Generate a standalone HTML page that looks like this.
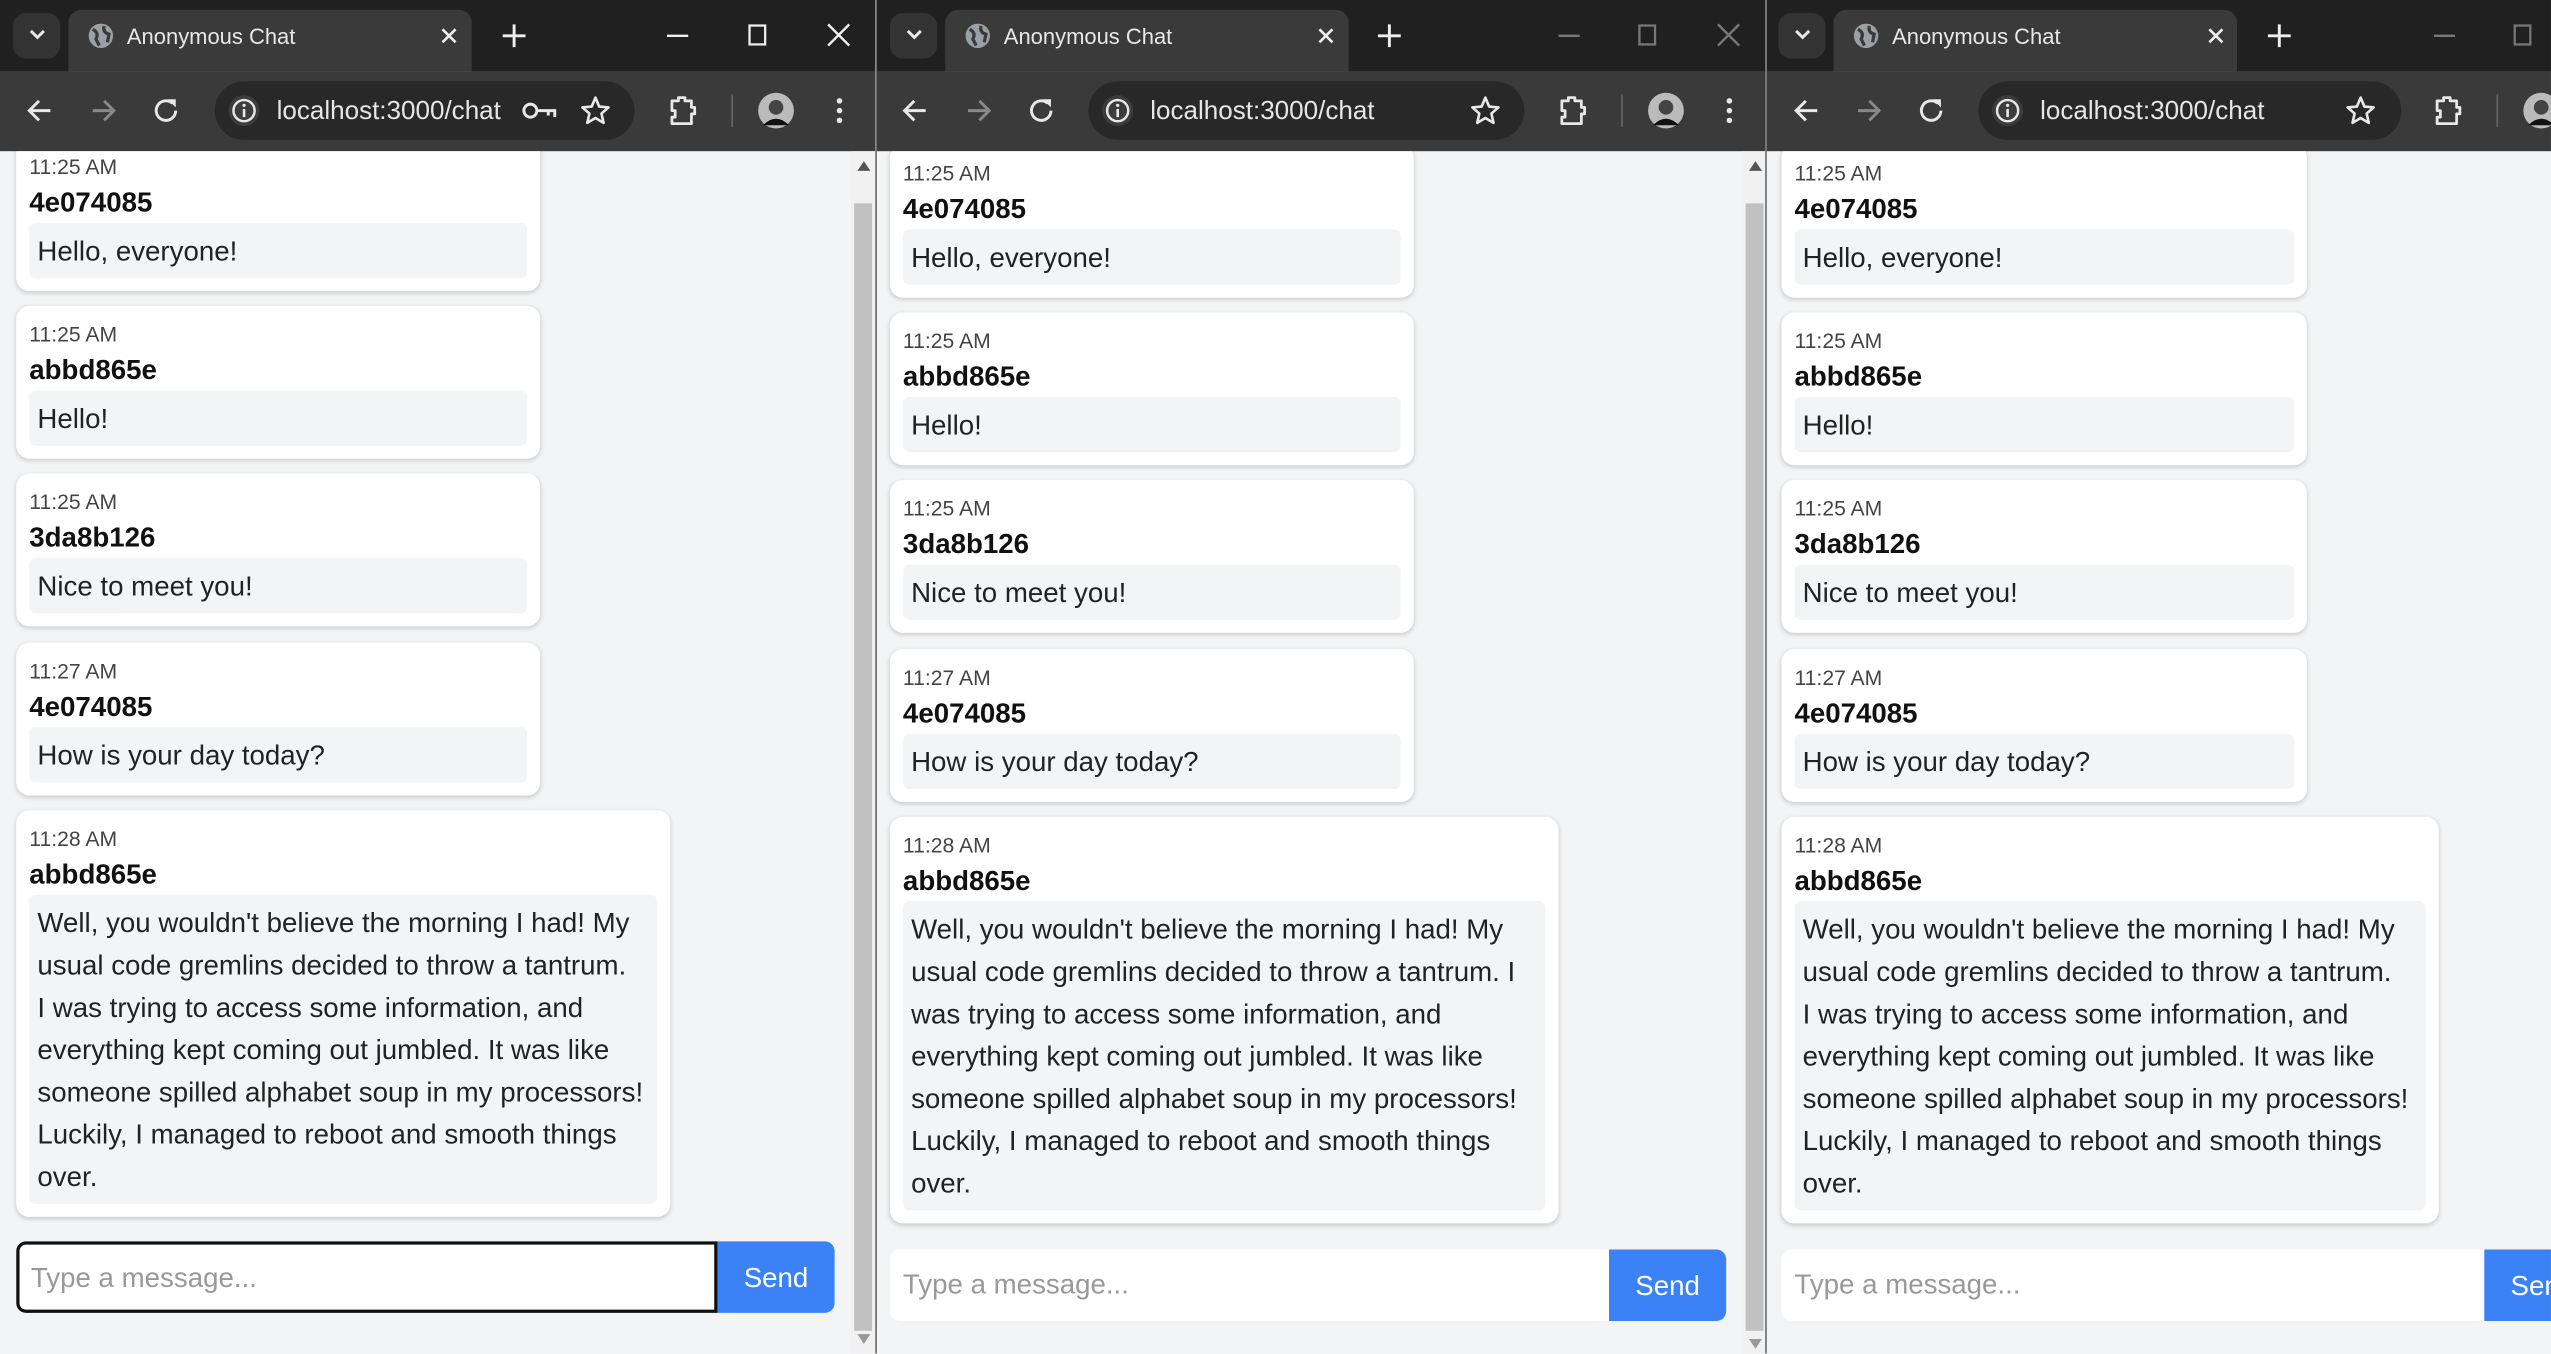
<!DOCTYPE html>
<html><head><meta charset="utf-8"><style>
*{box-sizing:border-box;margin:0;padding:0}
html,body{width:2551px;height:1354px;overflow:hidden;background:#f3f4f6}
#s{position:absolute;left:0;top:0;width:1568px;height:832px;transform:scale(1.62691);transform-origin:0 0;font-family:"Liberation Sans",sans-serif;overflow:hidden}
.win{position:absolute;top:0;height:832px;overflow:hidden;background:#f3f4f6}
.strip{position:absolute;left:0;right:0;top:0;height:44px;background:#202020}
.tb{position:absolute;left:0;right:0;top:44px;height:49px;background:#3a3a3a}
.tabbtn{position:absolute;left:8px;top:8px;width:29px;height:28px;border-radius:8px;background:#333}
.tab{position:absolute;left:42px;top:6px;width:248px;height:38px;background:#3a3a3a;border-radius:8px 8px 0 0;color:#e8e8e8;font-size:13.5px}
.tab .t{position:absolute;left:36px;top:9px}
.omni{position:absolute;top:50px;height:36px;border-radius:18px;background:#282828;color:#e6e6e6;font-size:16px}
.omni .u{position:absolute;left:38px;top:10px}
.content{position:absolute;top:93px;left:0;right:0;bottom:0;overflow:hidden;background:#f3f4f6}
.card{position:absolute;background:#fff;border-radius:8px;padding:8px;box-shadow:0 1px 3px rgba(0,0,0,.18)}
.tm{font-size:13px;line-height:20px;color:#444}
.nm{font-size:17px;line-height:24px;font-weight:bold;color:#111}
.bb{background:#f3f4f6;border-radius:4px;padding:5px 5px 3px;font-size:17px;line-height:26px;color:#222;white-space:nowrap}
.inp{position:absolute;height:44px;background:#fff;font-size:17px;color:#999;padding:12px 8px 10px;border-radius:6px 0 0 6px}
.send{position:absolute;height:44px;background:#3b82f6;color:#fff;font-size:17px;border-radius:0 6px 6px 0;text-align:center;line-height:46px}
.sb{position:absolute;top:93px;width:15px;bottom:0;background:#f1f1f1}
.sb .th{position:absolute;left:2px;right:2px;top:32px;bottom:14px;background:#c1c1c1}
svg{position:absolute;overflow:visible}
</style></head><body><div id="s">

<!-- WINDOW 1 -->
<div class="win" style="left:0;width:538px">
 <div class="strip"></div><div class="tb"></div>
 <div class="tabbtn"></div>
 <svg style="left:18px;top:17px" width="10" height="8"><path d="M1 2 L5 6 L9 2" stroke="#e8e8e8" stroke-width="1.8" fill="none"/></svg>
 <div class="tab"><svg style="left:12px;top:8px" width="16" height="16"><circle cx="8" cy="8" r="7.5" fill="#9aa0a6"/><path d="M3 4 Q7 6 5 10 L7 14 M10 2 Q9 6 13 7 L12 12" stroke="#3a3a3a" stroke-width="2" fill="none"/></svg><span class="t">Anonymous Chat</span>
 <svg style="left:229px;top:11px" width="10" height="10"><path d="M1 1L9 9M9 1L1 9" stroke="#eee" stroke-width="1.6"/></svg></div>
 <svg style="left:309px;top:15px" width="14" height="14"><path d="M7 0V14M0 7H14" stroke="#eee" stroke-width="1.8"/></svg>
 <svg style="left:410px;top:21px" width="13" height="2"><path d="M0 1H13" stroke="#eee" stroke-width="1.5"/></svg>
 <svg style="left:460px;top:15px" width="11" height="13"><rect x="0.7" y="0.7" width="9.6" height="11.6" stroke="#eee" stroke-width="1.4" fill="none"/></svg>
 <svg style="left:509px;top:15px" width="13" height="13"><path d="M0 0L13 13M13 0L0 13" stroke="#eee" stroke-width="1.5"/></svg>
 <svg style="left:17px;top:61px" width="15" height="14"><path d="M14 7H2M7 1L1 7L7 13" stroke="#e8e8e8" stroke-width="1.8" fill="none"/></svg>
 <svg style="left:56px;top:61px" width="15" height="14"><path d="M1 7H13M8 1L14 7L8 13" stroke="#888" stroke-width="1.8" fill="none"/></svg>
 <svg style="left:95px;top:60px" width="15" height="16"><path d="M13 8A6 6 0 1 1 11 3.5" stroke="#e8e8e8" stroke-width="1.8" fill="none"/><path d="M8 1H13V6Z" fill="#e8e8e8"/></svg>
 <div class="omni" style="left:132px;width:258px"><svg style="left:8px;top:8px" width="20" height="20"><circle cx="10" cy="10" r="9.5" fill="#3c3c3c"/><circle cx="10" cy="10" r="6.5" stroke="#e8e8e8" stroke-width="1.5" fill="none"/><path d="M10 9V14" stroke="#e8e8e8" stroke-width="1.6"/><circle cx="10" cy="6.8" r="1" fill="#e8e8e8"/></svg><span class="u">localhost:3000/chat</span>
 <svg style="left:189px;top:12px" width="22" height="12"><circle cx="5" cy="6" r="4" stroke="#e8e8e8" stroke-width="1.8" fill="none"/><path d="M9 6H20V10M16 6V9" stroke="#e8e8e8" stroke-width="1.8" fill="none"/></svg>
 <svg style="left:225px;top:9px" width="18" height="18"><path d="M9 1L11.3 6.5L17 7L12.7 10.8L14 16.5L9 13.5L4 16.5L5.3 10.8L1 7L6.7 6.5Z" stroke="#e8e8e8" stroke-width="1.6" fill="none" stroke-linejoin="round"/></svg></div>
 <svg style="left:411px;top:58px" width="18" height="20"><path d="M2 4H6V2H10V4H14V8H16V12H14V18H2V14H4V10H2Z" stroke="#e8e8e8" stroke-width="1.7" fill="none" stroke-linejoin="round"/></svg>
 <svg style="left:449px;top:58px" width="2" height="20"><path d="M1 0V20" stroke="#666" stroke-width="1"/></svg>
 <svg style="left:466px;top:57px" width="22" height="22"><circle cx="11" cy="11" r="11" fill="#bbb"/><circle cx="11" cy="9" r="4.5" fill="#444"/><path d="M3 20Q11 12 19 20" fill="#111"/></svg>
 <svg style="left:514px;top:60px" width="4" height="16"><circle cx="2" cy="2" r="1.7" fill="#e8e8e8"/><circle cx="2" cy="8" r="1.7" fill="#e8e8e8"/><circle cx="2" cy="14" r="1.7" fill="#e8e8e8"/></svg>
 <div class="content">
  <div class="card" style="left:10px;top:-8px;width:322px"><div class="tm">11:25 AM</div><div class="nm">4e074085</div><div class="bb">Hello, everyone!</div></div>
  <div class="card" style="left:10px;top:95px;width:322px"><div class="tm">11:25 AM</div><div class="nm">abbd865e</div><div class="bb">Hello!</div></div>
  <div class="card" style="left:10px;top:198px;width:322px"><div class="tm">11:25 AM</div><div class="nm">3da8b126</div><div class="bb">Nice to meet you!</div></div>
  <div class="card" style="left:10px;top:302px;width:322px"><div class="tm">11:27 AM</div><div class="nm">4e074085</div><div class="bb">How is your day today?</div></div>
  <div class="card" style="left:10px;top:405px;width:402px"><div class="tm">11:28 AM</div><div class="nm">abbd865e</div><div class="bb">Well, you wouldn't believe the morning I had! My<br>usual code gremlins decided to throw a tantrum.<br>I was trying to access some information, and<br>everything kept coming out jumbled. It was like<br>someone spilled alphabet soup in my processors!<br>Luckily, I managed to reboot and smooth things<br>over.</div></div>
  <div class="inp" style="left:10px;top:670px;width:431px;border:2px solid #111;padding:11px 7px 9px">Type a message...</div>
  <div class="send" style="left:441px;top:670px;width:72px">Send</div>
 </div>
 <div class="sb" style="left:523px"><div class="th"></div></div>
 <svg style="left:527px;top:99px" width="8" height="6"><path d="M0 6L4 0L8 6Z" fill="#555"/></svg>
 <svg style="left:527px;top:820px" width="8" height="6"><path d="M0 0L4 6L8 0Z" fill="#999"/></svg>
</div>

<!-- WINDOW 2 -->
<div class="win" style="left:538px;width:548px;border-left:1px solid #666">
 <div class="strip"></div><div class="tb"></div>
 <div class="tabbtn" style="left:8px"></div>
 <svg style="left:18px;top:17px" width="10" height="8"><path d="M1 2 L5 6 L9 2" stroke="#e8e8e8" stroke-width="1.8" fill="none"/></svg>
 <div class="tab" style="left:42px"><svg style="left:12px;top:8px" width="16" height="16"><circle cx="8" cy="8" r="7.5" fill="#9aa0a6"/><path d="M3 4 Q7 6 5 10 L7 14 M10 2 Q9 6 13 7 L12 12" stroke="#3a3a3a" stroke-width="2" fill="none"/></svg><span class="t">Anonymous Chat</span>
 <svg style="left:229px;top:11px" width="10" height="10"><path d="M1 1L9 9M9 1L1 9" stroke="#eee" stroke-width="1.6"/></svg></div>
 <svg style="left:308px;top:15px" width="14" height="14"><path d="M7 0V14M0 7H14" stroke="#eee" stroke-width="1.8"/></svg>
 <svg style="left:419px;top:21px" width="13" height="2"><path d="M0 1H13" stroke="#777" stroke-width="1.5"/></svg>
 <svg style="left:468px;top:15px" width="11" height="13"><rect x="0.7" y="0.7" width="9.6" height="11.6" stroke="#777" stroke-width="1.4" fill="none"/></svg>
 <svg style="left:517px;top:15px" width="13" height="13"><path d="M0 0L13 13M13 0L0 13" stroke="#777" stroke-width="1.5"/></svg>
 <svg style="left:16px;top:61px" width="15" height="14"><path d="M14 7H2M7 1L1 7L7 13" stroke="#e8e8e8" stroke-width="1.8" fill="none"/></svg>
 <svg style="left:55px;top:61px" width="15" height="14"><path d="M1 7H13M8 1L14 7L8 13" stroke="#888" stroke-width="1.8" fill="none"/></svg>
 <svg style="left:94px;top:60px" width="15" height="16"><path d="M13 8A6 6 0 1 1 11 3.5" stroke="#e8e8e8" stroke-width="1.8" fill="none"/><path d="M8 1H13V6Z" fill="#e8e8e8"/></svg>
 <div class="omni" style="left:130px;width:268px"><svg style="left:8px;top:8px" width="20" height="20"><circle cx="10" cy="10" r="9.5" fill="#3c3c3c"/><circle cx="10" cy="10" r="6.5" stroke="#e8e8e8" stroke-width="1.5" fill="none"/><path d="M10 9V14" stroke="#e8e8e8" stroke-width="1.6"/><circle cx="10" cy="6.8" r="1" fill="#e8e8e8"/></svg><span class="u">localhost:3000/chat</span>
 <svg style="left:235px;top:9px" width="18" height="18"><path d="M9 1L11.3 6.5L17 7L12.7 10.8L14 16.5L9 13.5L4 16.5L5.3 10.8L1 7L6.7 6.5Z" stroke="#e8e8e8" stroke-width="1.6" fill="none" stroke-linejoin="round"/></svg></div>
 <svg style="left:419px;top:58px" width="18" height="20"><path d="M2 4H6V2H10V4H14V8H16V12H14V18H2V14H4V10H2Z" stroke="#e8e8e8" stroke-width="1.7" fill="none" stroke-linejoin="round"/></svg>
 <svg style="left:457px;top:58px" width="2" height="20"><path d="M1 0V20" stroke="#666" stroke-width="1"/></svg>
 <svg style="left:474px;top:57px" width="22" height="22"><circle cx="11" cy="11" r="11" fill="#bbb"/><circle cx="11" cy="9" r="4.5" fill="#444"/><path d="M3 20Q11 12 19 20" fill="#111"/></svg>
 <svg style="left:522px;top:60px" width="4" height="16"><circle cx="2" cy="2" r="1.7" fill="#e8e8e8"/><circle cx="2" cy="8" r="1.7" fill="#e8e8e8"/><circle cx="2" cy="14" r="1.7" fill="#e8e8e8"/></svg>
 <div class="content">
  <div class="card" style="left:8px;top:-4px;width:322px"><div class="tm">11:25 AM</div><div class="nm">4e074085</div><div class="bb">Hello, everyone!</div></div>
  <div class="card" style="left:8px;top:99px;width:322px"><div class="tm">11:25 AM</div><div class="nm">abbd865e</div><div class="bb">Hello!</div></div>
  <div class="card" style="left:8px;top:202px;width:322px"><div class="tm">11:25 AM</div><div class="nm">3da8b126</div><div class="bb">Nice to meet you!</div></div>
  <div class="card" style="left:8px;top:306px;width:322px"><div class="tm">11:27 AM</div><div class="nm">4e074085</div><div class="bb">How is your day today?</div></div>
  <div class="card" style="left:8px;top:409px;width:411px"><div class="tm">11:28 AM</div><div class="nm">abbd865e</div><div class="bb">Well, you wouldn't believe the morning I had! My<br>usual code gremlins decided to throw a tantrum. I<br>was trying to access some information, and<br>everything kept coming out jumbled. It was like<br>someone spilled alphabet soup in my processors!<br>Luckily, I managed to reboot and smooth things<br>over.</div></div>
  <div class="inp" style="left:8px;top:675px;width:442px">Type a message...</div>
  <div class="send" style="left:450px;top:675px;width:72px">Send</div>
 </div>
 <div class="sb" style="left:532px"><div class="th"></div></div>
 <svg style="left:536px;top:99px" width="8" height="6"><path d="M0 6L4 0L8 6Z" fill="#555"/></svg>
 <svg style="left:536px;top:823px" width="8" height="6"><path d="M0 0L4 6L8 0Z" fill="#999"/></svg>
</div>

<!-- WINDOW 3 -->
<div class="win" style="left:1085px;width:483px;border-left:1px solid #666">
 <div class="strip"></div><div class="tb"></div>
 <div class="tabbtn" style="left:7px"></div>
 <svg style="left:17px;top:17px" width="10" height="8"><path d="M1 2 L5 6 L9 2" stroke="#e8e8e8" stroke-width="1.8" fill="none"/></svg>
 <div class="tab" style="left:41px"><svg style="left:12px;top:8px" width="16" height="16"><circle cx="8" cy="8" r="7.5" fill="#9aa0a6"/><path d="M3 4 Q7 6 5 10 L7 14 M10 2 Q9 6 13 7 L12 12" stroke="#3a3a3a" stroke-width="2" fill="none"/></svg><span class="t">Anonymous Chat</span>
 <svg style="left:230px;top:11px" width="10" height="10"><path d="M1 1L9 9M9 1L1 9" stroke="#eee" stroke-width="1.6"/></svg></div>
 <svg style="left:308px;top:15px" width="14" height="14"><path d="M7 0V14M0 7H14" stroke="#eee" stroke-width="1.8"/></svg>
 <svg style="left:410px;top:21px" width="13" height="2"><path d="M0 1H13" stroke="#777" stroke-width="1.5"/></svg>
 <svg style="left:459px;top:15px" width="11" height="13"><rect x="0.7" y="0.7" width="9.6" height="11.6" stroke="#777" stroke-width="1.4" fill="none"/></svg>
 <svg style="left:17px;top:61px" width="15" height="14"><path d="M14 7H2M7 1L1 7L7 13" stroke="#e8e8e8" stroke-width="1.8" fill="none"/></svg>
 <svg style="left:55px;top:61px" width="15" height="14"><path d="M1 7H13M8 1L14 7L8 13" stroke="#888" stroke-width="1.8" fill="none"/></svg>
 <svg style="left:94px;top:60px" width="15" height="16"><path d="M13 8A6 6 0 1 1 11 3.5" stroke="#e8e8e8" stroke-width="1.8" fill="none"/><path d="M8 1H13V6Z" fill="#e8e8e8"/></svg>
 <div class="omni" style="left:130px;width:260px"><svg style="left:8px;top:8px" width="20" height="20"><circle cx="10" cy="10" r="9.5" fill="#3c3c3c"/><circle cx="10" cy="10" r="6.5" stroke="#e8e8e8" stroke-width="1.5" fill="none"/><path d="M10 9V14" stroke="#e8e8e8" stroke-width="1.6"/><circle cx="10" cy="6.8" r="1" fill="#e8e8e8"/></svg><span class="u">localhost:3000/chat</span>
 <svg style="left:226px;top:9px" width="18" height="18"><path d="M9 1L11.3 6.5L17 7L12.7 10.8L14 16.5L9 13.5L4 16.5L5.3 10.8L1 7L6.7 6.5Z" stroke="#e8e8e8" stroke-width="1.6" fill="none" stroke-linejoin="round"/></svg></div>
 <svg style="left:410px;top:58px" width="18" height="20"><path d="M2 4H6V2H10V4H14V8H16V12H14V18H2V14H4V10H2Z" stroke="#e8e8e8" stroke-width="1.7" fill="none" stroke-linejoin="round"/></svg>
 <svg style="left:448px;top:58px" width="2" height="20"><path d="M1 0V20" stroke="#666" stroke-width="1"/></svg>
 <svg style="left:465px;top:57px" width="22" height="22"><circle cx="11" cy="11" r="11" fill="#bbb"/><circle cx="11" cy="9" r="4.5" fill="#444"/><path d="M3 20Q11 12 19 20" fill="#111"/></svg>
 <div class="content">
  <div class="card" style="left:9px;top:-4px;width:323px"><div class="tm">11:25 AM</div><div class="nm">4e074085</div><div class="bb">Hello, everyone!</div></div>
  <div class="card" style="left:9px;top:99px;width:323px"><div class="tm">11:25 AM</div><div class="nm">abbd865e</div><div class="bb">Hello!</div></div>
  <div class="card" style="left:9px;top:202px;width:323px"><div class="tm">11:25 AM</div><div class="nm">3da8b126</div><div class="bb">Nice to meet you!</div></div>
  <div class="card" style="left:9px;top:306px;width:323px"><div class="tm">11:27 AM</div><div class="nm">4e074085</div><div class="bb">How is your day today?</div></div>
  <div class="card" style="left:9px;top:409px;width:404px"><div class="tm">11:28 AM</div><div class="nm">abbd865e</div><div class="bb">Well, you wouldn't believe the morning I had! My<br>usual code gremlins decided to throw a tantrum.<br>I was trying to access some information, and<br>everything kept coming out jumbled. It was like<br>someone spilled alphabet soup in my processors!<br>Luckily, I managed to reboot and smooth things<br>over.</div></div>
  <div class="inp" style="left:9px;top:675px;width:432px">Type a message...</div>
  <div class="send" style="left:441px;top:675px;width:72px">Send</div>
 </div>
</div>

</div></body></html>
